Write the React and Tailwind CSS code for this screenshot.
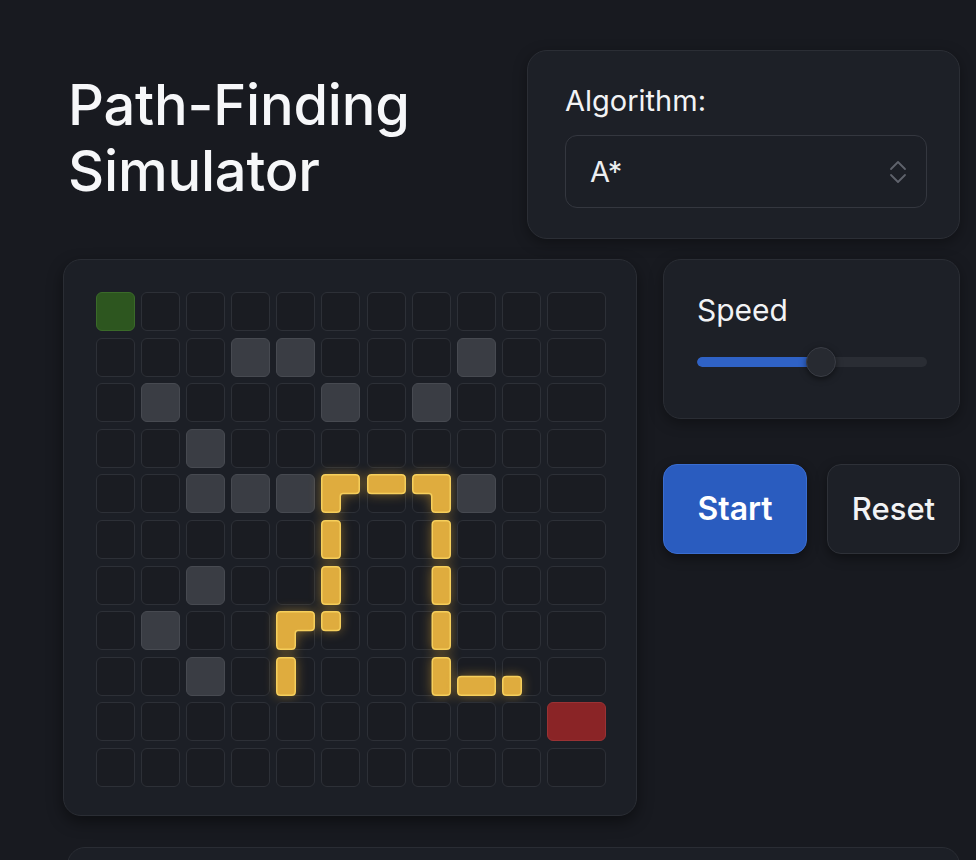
import React from "react";

const WALLS = new Set([
  "1-3", "1-4", "1-8",
  "2-1", "2-5", "2-7",
  "3-2",
  "4-2", "4-3", "4-4", "4-8",
  "6-2", "7-1", "8-2",
]);

const PATH = {
  "4-5": "tl",
  "4-6": "htop",
  "4-7": "tr",
  "5-5": "vleft",
  "6-5": "vleft",
  "7-5": "sqtl",
  "7-4": "tl",
  "8-4": "vleft",
  "5-7": "vright",
  "6-7": "vright",
  "7-7": "vright",
  "8-7": "vright",
  "8-8": "hbot",
  "8-9": "sqbl",
};

const SHAPES = {
  tl: "M0.75,4.5 Q0.75,0.75 4.5,0.75 L34.5,0.75 Q38.25,0.75 38.25,4.5 L38.25,16 Q38.25,19.5 34.5,19.5 L22,19.5 Q19.25,19.5 19.25,22.5 L19.25,34.5 Q19.25,38.25 15.5,38.25 L4.5,38.25 Q0.75,38.25 0.75,34.5 Z",
  tr: "M0.75,4.5 Q0.75,0.75 4.5,0.75 L34.5,0.75 Q38.25,0.75 38.25,4.5 L38.25,34.5 Q38.25,38.25 34.5,38.25 L23.5,38.25 Q19.75,38.25 19.75,34.5 L19.75,22.5 Q19.75,19.5 17,19.5 L4.5,19.5 Q0.75,19.5 0.75,16 Z",
  htop: "M0.75,4.5 Q0.75,0.75 4.5,0.75 L34.5,0.75 Q38.25,0.75 38.25,4.5 L38.25,16 Q38.25,19.5 34.5,19.5 L4.5,19.5 Q0.75,19.5 0.75,16 Z",
  hbot: "M0.75,23 Q0.75,19.5 4.5,19.5 L34.5,19.5 Q38.25,19.5 38.25,23 L38.25,34.5 Q38.25,38.25 34.5,38.25 L4.5,38.25 Q0.75,38.25 0.75,34.5 Z",
  vleft: "M0.75,4.5 Q0.75,0.75 4.5,0.75 L15.5,0.75 Q19.25,0.75 19.25,4.5 L19.25,34.5 Q19.25,38.25 15.5,38.25 L4.5,38.25 Q0.75,38.25 0.75,34.5 Z",
  vright: "M20.25,4.5 Q20.25,0.75 24,0.75 L34.5,0.75 Q38.25,0.75 38.25,4.5 L38.25,34.5 Q38.25,38.25 34.5,38.25 L24,38.25 Q20.25,38.25 20.25,34.5 Z",
  sqtl: "M0.75,4.5 Q0.75,0.75 4.5,0.75 L15.5,0.75 Q19.25,0.75 19.25,4.5 L19.25,16 Q19.25,19.5 15.5,19.5 L4.5,19.5 Q0.75,19.5 0.75,16 Z",
  sqbl: "M0.75,23 Q0.75,19.5 4.5,19.5 L15.5,19.5 Q19.25,19.5 19.25,23 L19.25,34.5 Q19.25,38.25 15.5,38.25 L4.5,38.25 Q0.75,38.25 0.75,34.5 Z",
};

function Cell({ r, c }) {
  const key = `${r}-${c}`;
  let cls = "bg-[#1a1c22] border-[#2d3037]";
  if (r === 0 && c === 0) cls = "bg-[#2d561f] border-[#3a6a29]";
  else if (r === 9 && c === 10) cls = "bg-[#8a2426] border-[#9a3234]";
  else if (WALLS.has(key)) cls = "bg-[#3a3d44] border-[#474a51]";
  const shape = PATH[key];
  return (
    <div className={`relative h-[39px] rounded-[6px] border ${cls}`}>
      {shape && (
        <svg
          className="absolute left-[-1px] top-[-1px] overflow-visible drop-shadow-[0_0_6px_rgba(234,176,50,0.45)]"
          width="39"
          height="39"
          viewBox="0 0 39 39"
        >
          <path d={SHAPES[shape]} fill="#dfac3e" stroke="#f6cf5c" strokeWidth="1.5" />
        </svg>
      )}
    </div>
  );
}

export default function App() {
  const rows = Array.from({ length: 11 }, (_, r) => r);
  const cols = Array.from({ length: 11 }, (_, c) => c);
  return (
    <div
      className="w-[976px] h-[860px] overflow-hidden bg-[#181a20] text-white"
      style={{ fontFamily: "Inter, 'Noto Sans', sans-serif" }}
    >
      <div className="flex">
        <div className="pl-[68px] pt-[72px] w-[527px]">
          <h1 className="text-[56px] leading-[66px] font-medium tracking-[-0.2px] text-[#f6f7f9]">
            Path-Finding
            <br />
            Simulator
          </h1>
        </div>
        <div className="mt-[50px] w-[433px] h-[189px] rounded-[20px] border border-[#2b2e35] bg-[#1d2027] pl-[37px] pr-[32px] pt-[31px] shadow-[0_4px_14px_rgba(0,0,0,0.35)]">
          <div className="text-[29px] leading-[38px] text-[#f2f3f5]">Algorithm:</div>
          <div className="mt-[15px] h-[73px] rounded-[12px] border border-[#34373f] bg-[#1c1f26] flex items-center justify-between pl-[24px] pr-[18px]">
            <span className="text-[29px] text-[#eceef1]">A*</span>
            <svg width="20" height="26" viewBox="0 0 20 26" fill="none" stroke="#5f636c" strokeWidth="1.8" strokeLinecap="round" strokeLinejoin="round">
              <path d="M3 10 L10 3 L17 10" />
              <path d="M3 16 L10 23 L17 16" />
            </svg>
          </div>
        </div>
      </div>

      <div className="flex mt-[20px] pl-[63px] gap-[26px]">
        <div className="w-[574px] h-[557px] rounded-[18px] border border-[#2a2d34] bg-[#1c1f26] pl-[32px] pt-[32px] shadow-[0_6px_16px_rgba(0,0,0,0.45)]">
          <div className="grid grid-cols-[repeat(10,39px)_59px] gap-x-[6.1px] gap-y-[6.6px]">
            {rows.map((r) => cols.map((c) => <Cell key={`${r}-${c}`} r={r} c={c} />))}
          </div>
        </div>

        <div className="w-[297px] flex flex-col">
          <div className="h-[160px] rounded-[18px] border border-[#2a2d34] bg-[#1d2027] pl-[33px] pr-[32px] pt-[31px] shadow-[0_4px_14px_rgba(0,0,0,0.35)]">
            <div className="text-[30px] leading-[38px] text-[#f2f3f5]">Speed</div>
            <div className="relative mt-[18px] h-[30px] flex items-center">
              <div className="w-full h-[10px] rounded-full bg-[#2a2d34] overflow-hidden">
                <div className="h-full w-[55%] bg-[#2f62c6] rounded-full" />
              </div>
              <div className="absolute left-[109px] top-0 w-[30px] h-[30px] rounded-full bg-[#272a31] border border-[#3a3d45] shadow-[0_2px_6px_rgba(0,0,0,0.5)]" />
            </div>
          </div>

          <div className="mt-[45px] flex gap-[20px]">
            <button className="w-[144px] h-[90px] rounded-[14px] bg-[#2a5cbf] border border-[#3a6dd0] text-[32px] font-semibold text-white shadow-[0_4px_12px_rgba(0,0,0,0.4)]">
              Start
            </button>
            <button className="w-[133px] h-[90px] rounded-[14px] bg-[#1d2027] border border-[#2e3138] text-[31px] font-medium text-[#f2f3f5] shadow-[0_4px_12px_rgba(0,0,0,0.4)]">
              Reset
            </button>
          </div>
        </div>
      </div>

      <div className="mt-[31px] ml-[67px] w-[893px] h-[100px] rounded-[18px] border border-[#2a2d34] bg-[#1c1f26]" />
    </div>
  );
}
